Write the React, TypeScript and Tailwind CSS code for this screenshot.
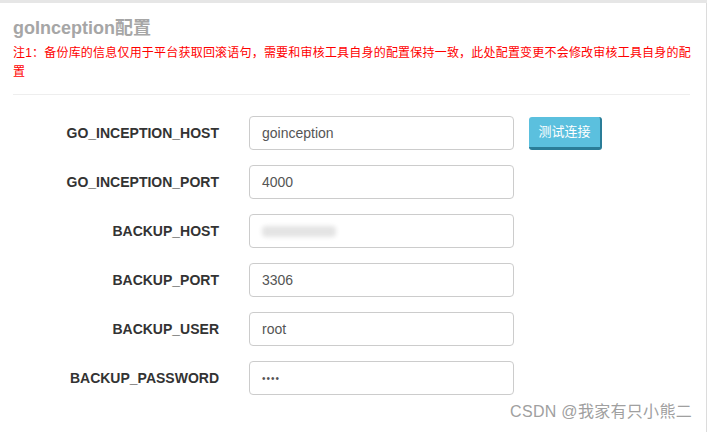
const rows: { label: string; value: string; kind?: "blur" | "password" }[] = [
  { label: "GO_INCEPTION_HOST", value: "goinception" },
  { label: "GO_INCEPTION_PORT", value: "4000" },
  { label: "BACKUP_HOST", value: "", kind: "blur" },
  { label: "BACKUP_PORT", value: "3306" },
  { label: "BACKUP_USER", value: "root" },
  { label: "BACKUP_PASSWORD", value: "••••", kind: "password" },
];

export default function App() {
  return (
    <div
      className="relative w-[707px] h-[432px] overflow-hidden bg-white border-t-[3px] border-[#e6e6e6]"
      style={{ fontFamily: '"Liberation Sans", Arial, "Noto Sans CJK SC", sans-serif' }}
    >
      <div className="absolute right-0 top-0 h-full w-px bg-[#dcdcdc]" />
      <div className="pl-[13px] pr-[17px] pt-[14px]">
        <h3 className="text-[18px] font-bold leading-[22px] text-[#a6a6a6]">goInception配置</h3>
        <p className="-mr-[8px] mt-[5px] text-[12px] leading-[19px] tracking-[0.2px] text-[#ff0000]">
          注1：备份库的信息仅用于平台获取回滚语句，需要和审核工具自身的配置保持一致，此处配置变更不会修改审核工具自身的配置
        </p>
        <div className="mt-[12px] h-px bg-[#eeeeee]" />

        <div className="mt-[21px] flex flex-col gap-[15px]">
          {rows.map((r, i) => (
            <div key={r.label} className="flex items-center">
              <label className="w-[206px] text-right text-[14px] font-bold text-[#333333]">
                {r.label}
              </label>
              <div className="ml-[30px] flex h-[34px] w-[265px] items-center rounded-[4px] border border-[#cccccc] px-[12px] text-[14px] text-[#555555]">
                {r.kind === "blur" ? (
                  <span className="block h-[11px] w-[74px] rounded-sm bg-[#e4e4e4] blur-[2px]" />
                ) : r.kind === "password" ? (
                  <span className="text-[10px] tracking-[1px]">{r.value}</span>
                ) : (
                  r.value
                )}
              </div>
              {i === 0 && (
                <button className="ml-[15px] h-[33px] w-[73px] rounded-[3px] border-b-[3px] border-r-[2px] border-[#2a7d98] bg-[#5bc0de] text-[13px] text-white">
                  测试连接
                </button>
              )}
            </div>
          ))}
        </div>
      </div>
      <div className="absolute bottom-[8px] right-[15px] text-[16px] tracking-[0.3px] text-[#a0a0a0]">
        CSDN @我家有只小熊二
      </div>
    </div>
  );
}
